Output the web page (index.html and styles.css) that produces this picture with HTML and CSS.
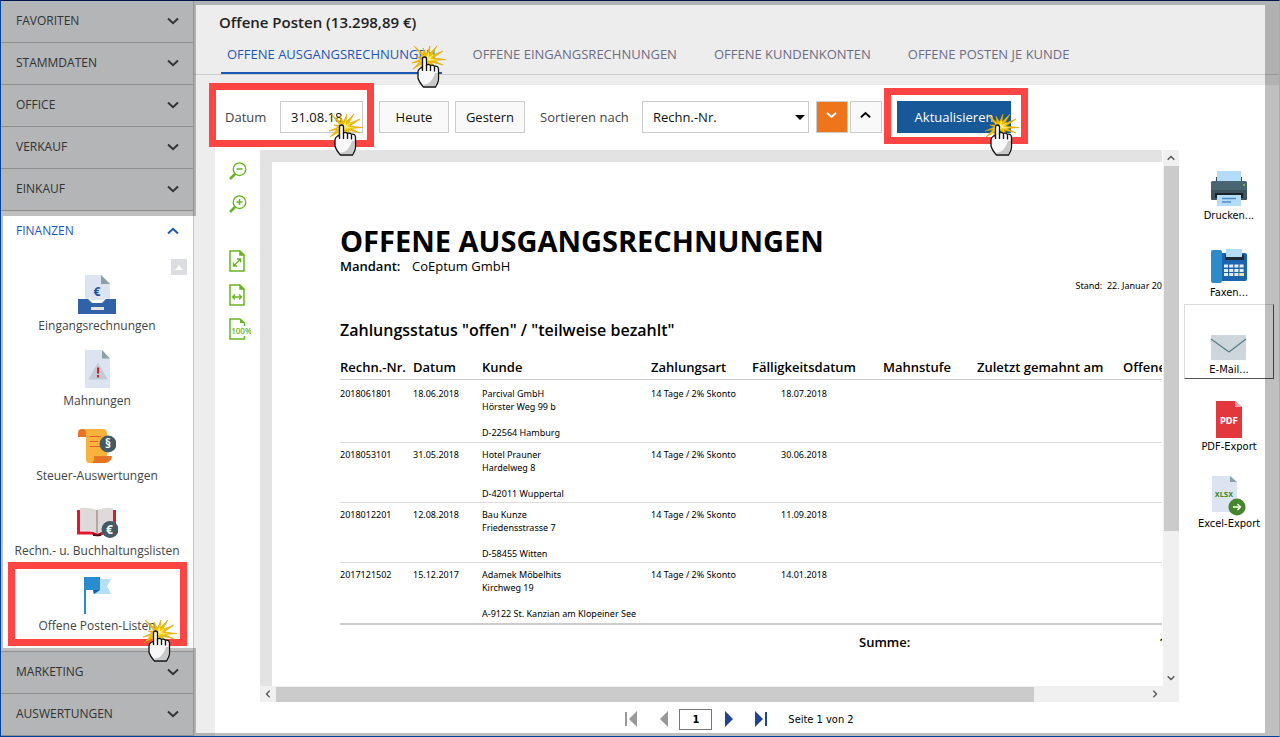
FILE: index.html
```html
<!DOCTYPE html>
<html lang="de">
<head>
  <meta charset="UTF-8">
  <meta name="viewport" content="width=device-width, initial-scale=1.0">
  <title>Offene Posten</title>
  <link rel="stylesheet" href="styles.css">
</head>
<body>
  <svg class="sprite" aria-hidden="true">
    <symbol id="chevron" viewBox="0 0 12 8">
      <path d="M1 1.5 6 6.200 11 1.500" fill="none" stroke="currentColor" stroke-width="2"/>
    </symbol>
    <symbol id="hand" viewBox="0 0 35 43">
      <path d="M2 1 12 9.500 11 3 14.500 9 18 1 17 9 25 1 19.500 10.500 31 6 21 13 34 14.500 22 15.500 31 20 19 17 23 23 15 17.500 6 27 10.500 18.500 1 24 8 16.500 0 18 9.500 14 5 12 11 12Z" fill="#f2c000" stroke="#dda200" stroke-width=".6"/>
      <path d="M11 10.500 14 12.500 17 7 17 12 22 9 18.500 13.500 26 15 17 15.500 11 19 13 15 8 15.500 12.500 13.500Z" fill="#ffec6e"/>
      <path d="M10.500 26V14q0-2 2-2t2 2v6q1.500-1.500 4 .5 2-1 4 .8 3.500-.8 4 2.700v10q0 3-3 8H11.500Q7 37 6 33v-6q0-3 4.500-5z" fill="#f8f8f8" stroke="#111" stroke-width="1.300"/>
      <path d="M14.500 20v6M18.500 21v5M22.500 22v4.500" stroke="#111" stroke-width="1.300" fill="none"/>
      <path d="M23 28h2.800v7l-2.800 6H12.500l-1-1.500q8 0 11.500-11.500z" fill="#aaa" opacity=".6"/>
    </symbol>
    <symbol id="sheet" viewBox="0 0 16 22">
      <path d="M11 1H1v20h14V5zM11 1v4h4z" fill="none" stroke="currentColor" stroke-width="1.500"/>
      <path d="M11 1v4h4z" fill="currentColor"/>
    </symbol>
  </svg>

  <div class="window">
    <nav class="sidebar">
      <button class="group">FAVORITEN<svg><use href="#chevron"/></svg></button>
      <button class="group">STAMMDATEN<svg><use href="#chevron"/></svg></button>
      <button class="group">OFFICE<svg><use href="#chevron"/></svg></button>
      <button class="group">VERKAUF<svg><use href="#chevron"/></svg></button>
      <button class="group">EINKAUF<svg><use href="#chevron"/></svg></button>
      <div class="open-group">
        <button class="group active">FINANZEN<svg><use href="#chevron"/></svg></button>
        <button class="scroll-up" aria-label="Nach oben"></button>
        <a class="module" href="#">
          <svg width="38" height="40" viewBox="0 0 38 40">
            <path d="M7 0h16l9 9v16H7z" fill="#dbe4f0"/><path d="M23 0v9h9z" fill="#8aa0a8"/>
            <path d="M0 24h10l4 4h10l4-4h10v15H0z" fill="#2f62a8"/><path d="M11 23l4 4h9l4-4" fill="none" stroke="#fff" stroke-width="1"/>
            <rect x="13" y="32" width="13" height="3" fill="#e6e4e2"/>
            <text x="19" y="20.500" class="ic-text" font-size="12" fill="#1d4f9e">€</text>
          </svg>
          Eingangsrechnungen
        </a>
        <a class="module" href="#">
          <svg width="38" height="40" viewBox="0 0 38 40">
            <path d="M7 0h17l8 9v29H7z" fill="#dbe4f0"/><path d="M24 0v8.500h8z" fill="#8aa0a8"/>
            <path d="M20 13.500 29 29H11z" fill="#c2ccd4" stroke="#c2ccd4" stroke-linejoin="round"/>
            <path d="M20 17.500v6M20 25v2.500" stroke="#e0172d" stroke-width="2"/>
          </svg>
          Mahnungen
        </a>
        <a class="module" href="#">
          <svg width="38" height="40" viewBox="0 0 38 40">
            <path d="M5 4h20q4 0 4 5v22h-4q0 7-5 7H11q-3 0-3-4V12z" fill="#f9b23c"/>
            <path d="M0 12V8q0-4 4-4t4 4v4z" fill="#e87428"/>
            <path d="M16 31h18q-1 7-7 7H13q4-1 3-7z" fill="#e87428"/>
            <path d="M12 11.500h11M12 16.500h8M12 21.500h10" stroke="#e05f28" stroke-width="1.200"/>
            <circle cx="30" cy="19" r="8.500" fill="#435a64"/>
            <text x="30" y="23" class="ic-text" font-size="12" fill="#fff">§</text>
          </svg>
          Steuer-Auswertungen
        </a>
        <a class="module" href="#">
          <svg width="42" height="40" viewBox="0 0 42 40">
            <path d="M2.500 10v23h14q5 4 10 0h12V10" fill="none" stroke="#e3162f" stroke-width="3"/>
            <path d="M4 8q8-1 17 2 9-3 16-2v23q-8-1-16 2-9-3-17-2z" fill="#dfdada"/>
            <path d="M21 10v23" stroke="#b9a4a4" stroke-width="2"/>
            <path d="M17 33q4 3 8 0v3h-8z" fill="#45151b"/>
            <circle cx="34" cy="29.500" r="8.500" fill="#435a64"/>
            <text x="33.500" y="34" class="ic-text" font-size="12" fill="#fff">€</text>
          </svg>
          Rechn.- u. Buchhaltungslisten
        </a>
        <a class="module marked" href="#">
          <svg width="38" height="40" viewBox="0 0 38 40">
            <path d="M15 4h18l-4 7 4 8H15z" fill="#b5def7"/>
            <path d="M6 2h16v13H8v24H6z" fill="#288cce"/><path d="M15 15h7l-6 4z" fill="#0d5da8"/>
          </svg>
          Offene Posten-Listen
          <svg class="pointer"><use href="#hand"/></svg>
        </a>
      </div>
      <button class="group">MARKETING<svg><use href="#chevron"/></svg></button>
      <button class="group">AUSWERTUNGEN<svg><use href="#chevron"/></svg></button>
    </nav>

    <main>
      <header>
        <h1>Offene Posten (13.298,89 €)</h1>
        <nav class="tabs">
          <a class="current" href="#">OFFENE AUSGANGSRECHNUNGEN<svg class="pointer"><use href="#hand"/></svg></a>
          <a href="#">OFFENE EINGANGSRECHNUNGEN</a>
          <a href="#">OFFENE KUNDENKONTEN</a>
          <a href="#">OFFENE POSTEN JE KUNDE</a>
        </nav>
      </header>

      <div class="content">
        <form class="toolbar">
          <div class="date-field marked">
            <label for="date">Datum</label>
            <input id="date" type="text" value="31.08.18">
            <svg class="pointer"><use href="#hand"/></svg>
          </div>
          <button type="button" class="btn">Heute</button>
          <button type="button" class="btn">Gestern</button>
          <label class="sort-label" for="sort">Sortieren nach</label>
          <div class="select">
            <select id="sort"><option>Rechn.-Nr.</option></select>
          </div>
          <button type="button" class="order desc" aria-label="Absteigend"><svg><use href="#chevron"/></svg></button>
          <button type="button" class="order asc" aria-label="Aufsteigend"><svg><use href="#chevron"/></svg></button>
          <div class="refresh marked">
            <button type="button">Aktualisieren</button>
            <svg class="pointer"><use href="#hand"/></svg>
          </div>
        </form>

        <div class="workspace">
          <div class="zoom-tools">
            <button aria-label="Verkleinern">
              <svg width="18" height="18" viewBox="0 0 18 18" fill="none" stroke="currentColor"><circle cx="10.500" cy="7.200" r="6.300" stroke-width="1.300"/><path d="M1 17l5.500-5.500" stroke-width="2.500"/><path d="M7.500 7h6" stroke-width="1.500"/></svg>
            </button>
            <button aria-label="Vergrößern">
              <svg width="18" height="18" viewBox="0 0 18 18" fill="none" stroke="currentColor"><circle cx="10.500" cy="7.200" r="6.300" stroke-width="1.300"/><path d="M1 17l5.500-5.500" stroke-width="2.500"/><path d="M7.500 7h6M10.500 4v6" stroke-width="1.500"/></svg>
            </button>
            <button class="fit" aria-label="Ganze Seite">
              <svg width="16" height="22" viewBox="0 0 16 22"><use href="#sheet"/><path d="M5 15.500 11 9.500M8 9h3.500v3.500M4.500 12.500V16H8" fill="none" stroke="currentColor" stroke-width="1.300"/></svg>
            </button>
            <button class="fit" aria-label="Seitenbreite">
              <svg width="16" height="22" viewBox="0 0 16 22"><use href="#sheet"/><path d="M3.500 13h9M6 10.500 3.500 13 6 15.500M10 10.500l2.500 2.500-2.500 2.500" fill="none" stroke="currentColor" stroke-width="1.300"/></svg>
            </button>
            <button class="fit" aria-label="Originalgröße">
              <svg width="22" height="22" viewBox="0 0 22 22"><path d="M15.500 8V5L11 1H1v20h14.500v-3" fill="none" stroke="currentColor" stroke-width="1.500"/><path d="M11 1v4h4.500z" fill="currentColor"/><text x="12.500" y="16" class="ic-text zoom-text" font-size="8" fill="currentColor">100%</text></svg>
            </button>
          </div>

          <div class="viewer">
            <div class="frame">
              <article class="page">
                <h2>OFFENE AUSGANGSRECHNUNGEN</h2>
                <p class="client"><b>Mandant:</b>CoEptum GmbH</p>
                <p class="as-of">Stand:&nbsp; 22. Januar 20</p>
                <h3>Zahlungsstatus "offen" / "teilweise bezahlt"</h3>
                <table>
                  <colgroup>
                    <col class="c-no"><col class="c-date"><col class="c-customer"><col class="c-terms">
                    <col class="c-due"><col class="c-level"><col class="c-last"><col>
                  </colgroup>
                  <thead>
                    <tr><th>Rechn.-Nr.</th><th>Datum</th><th>Kunde</th><th>Zahlungsart</th><th>Fälligkeitsdatum</th><th>Mahnstufe</th><th>Zuletzt gemahnt am</th><th>Offene</th></tr>
                  </thead>
                  <tbody>
                    <tr><td>2018061801</td><td>18.06.2018</td><td>Parcival GmbH<br>Hörster Weg 99 b<br><br>D-22564 Hamburg</td><td>14 Tage / 2% Skonto</td><td class="due">18.07.2018</td><td></td><td></td><td></td></tr>
                    <tr><td>2018053101</td><td>31.05.2018</td><td>Hotel Prauner<br>Hardelweg 8<br><br>D-42011 Wuppertal</td><td>14 Tage / 2% Skonto</td><td class="due">30.06.2018</td><td></td><td></td><td></td></tr>
                    <tr><td>2018012201</td><td>12.08.2018</td><td>Bau Kunze<br>Friedensstrasse 7<br><br>D-58455 Witten</td><td>14 Tage / 2% Skonto</td><td class="due">11.09.2018</td><td></td><td></td><td></td></tr>
                    <tr><td>2017121502</td><td>15.12.2017</td><td>Adamek Möbelhits<br>Kirchweg 19<br><br>A-9122 St. Kanzian am Klopeiner See</td><td>14 Tage / 2% Skonto</td><td class="due">14.01.2018</td><td></td><td></td><td></td></tr>
                  </tbody>
                  <tfoot>
                    <tr><th colspan="5">Summe:</th><td colspan="3">1</td></tr>
                  </tfoot>
                </table>
              </article>
            </div>
            <div class="scrollbar vertical">
              <svg class="up"><use href="#chevron"/></svg>
              <div class="track"><div class="thumb"></div></div>
              <svg><use href="#chevron"/></svg>
            </div>
            <div class="scrollbar horizontal">
              <svg class="left"><use href="#chevron"/></svg>
              <div class="track"><div class="thumb"></div></div>
              <svg class="right"><use href="#chevron"/></svg>
            </div>
            <div class="corner"></div>
          </div>

          <div class="actions">
            <button>
              <svg width="38" height="40" viewBox="0 0 38 40">
                <path d="M6 13V9h26v4" fill="#37474f"/><path d="M7 3h24v10H7z" fill="#b3dcf7"/>
                <rect x="1" y="13" width="36" height="19" rx="1.500" fill="#4a6572"/><path d="M1 22h36v8.500q0 1.500-1.500 1.500h-33Q1 32 1 30.500z" fill="#3e5560"/>
                <path d="M6 30v-4h26v4" fill="none" stroke="#18242a" stroke-width="2"/>
                <path d="M7 27h24v11H7z" fill="#b3dcf7"/><path d="M12 30.500h14M12 34h9" stroke="#5189c7" stroke-width="1.500"/><circle cx="34" cy="17" r="1" fill="#8bd42c"/>
              </svg>
              Drucken...
            </button>
            <button>
              <svg width="38" height="40" viewBox="0 0 38 40">
                <rect x="9" y="8" width="28" height="28" rx="2" fill="#1c64ae"/><rect x="1" y="5" width="11" height="33" rx="2" fill="#2c8ccb"/>
                <rect x="15" y="10" width="19" height="5" fill="#1d2935"/><path d="M16 4h16v8H16z" fill="#b3dcf7"/>
                <path d="M14 21h20M14 25.500h20M14 29.500h20" stroke="#e4edf4" stroke-width="3" stroke-dasharray="4 1.200"/><path d="M29.500 29.500h4.500" stroke="#f2e488" stroke-width="3"/>
              </svg>
              Faxen...
            </button>
            <button class="focused">
              <svg width="38" height="40" viewBox="0 0 38 40">
                <rect x="1" y="13" width="35" height="25" rx="1" fill="#ccd6db"/><path d="M1 17l18 13 17-13" fill="none" stroke="#5b7d8b" stroke-width="1.300"/>
              </svg>
              E-Mail...
            </button>
            <button>
              <svg width="38" height="40" viewBox="0 0 38 40">
                <path d="M6 2h19l7 6v31H6z" fill="#e2373d"/><path d="M25 2v6h7z" fill="#f5a3a3"/>
                <text x="19" y="25" class="ic-text" font-size="9" fill="#fff">PDF</text>
              </svg>
              PDF-Export
            </button>
            <button>
              <svg width="38" height="40" viewBox="0 0 38 40">
                <path d="M2 0h18l7 6v30H2z" fill="#dbe4f0"/><path d="M20 0v6h7z" fill="#8aa0a8"/>
                <text x="14" y="21" class="ic-text" font-size="7" fill="#3d8b2c">XLSX</text>
                <circle cx="27" cy="31" r="8.500" fill="#45862f"/><path d="M23 31h7.500M27.500 28l3 3-3 3" fill="none" stroke="#fff" stroke-width="1.300"/>
              </svg>
              Excel-Export
            </button>
          </div>
        </div>

        <div class="pager">
          <button disabled aria-label="Erste Seite"><svg width="14" height="16"><path d="M1 1v14" stroke="currentColor" stroke-width="2"/><path d="M12 0v16L4 8z" fill="currentColor"/></svg></button>
          <button disabled aria-label="Vorherige Seite"><svg width="10" height="16"><path d="M9 0v16L1 8z" fill="currentColor"/></svg></button>
          <input type="text" value="1" aria-label="Seite">
          <button aria-label="Nächste Seite"><svg width="10" height="16"><path d="M1 0v16l8-8z" fill="currentColor"/></svg></button>
          <button aria-label="Letzte Seite"><svg width="14" height="16"><path d="M12 1v14" stroke="currentColor" stroke-width="2"/><path d="M1 0v16l8-8z" fill="currentColor"/></svg></button>
          <span>Seite 1 von 2</span>
        </div>
      </div>
    </main>

    <div class="dim dim-top"></div>
    <div class="dim dim-right"></div>
    <div class="dim dim-bottom"></div>
    <div class="dim dim-menu-top"></div>
    <div class="dim dim-menu-edge"></div>
    <div class="dim dim-menu-bottom"></div>
  </div>
</body>
</html>
```
FILE: styles.css
```css
* {
  box-sizing: border-box;
}

body {
  margin: 0;
  font-family: "Open Sans", "Noto Sans", sans-serif;
  font-size: 13px;
  color: #444;
}

button,
input,
select {
  font: inherit;
  border-radius: 0;
}

button {
  padding: 0;
  border: none;
  background: none;
  color: inherit;
}

a {
  color: inherit;
  text-decoration: none;
}

.sprite {
  display: none;
}

.ic-text {
  font-weight: 700;
  text-anchor: middle;
}

.zoom-text {
  font-weight: 600;
}

.window {
  position: relative;
  display: flex;
  min-height: 100vh;
  border: 1px solid #00429a;
  border-top-color: #001450;
  border-right-color: #aaa;
}

/* Seitenmenü */
.sidebar {
  flex: 0 0 193px;
  border-right: 1px solid #c4c4c4;
  background: #fff;
}

.group {
  display: flex;
  align-items: center;
  justify-content: space-between;
  width: 100%;
  height: 42px;
  padding: 0 14px 2px 15px;
  border-bottom: 1px solid #bfbfbf;
  background: #eff2f4;
  font-size: 12px;
}

.group svg {
  width: 12px;
  height: 8px;
}

.group.active {
  border-color: #fff;
  background: #fff;
  color: #1d58b7;
}

.group.active svg {
  transform: rotate(180deg);
}

.open-group {
  position: relative;
  display: flex;
  flex-direction: column;
  border-bottom: 1px solid #bfbfbf;
  padding-bottom: 1px;
}

.scroll-up {
  align-self: flex-end;
  width: 16px;
  height: 16px;
  margin: 6px 6px 0 0;
  background: #dcdde0;
}

.scroll-up::before {
  content: "";
  display: block;
  width: 0;
  margin: 0 auto;
  border: 4px solid transparent;
  border-top: none;
  border-bottom: 5px solid #fff;
}

.module {
  display: flex;
  flex-direction: column;
  align-items: center;
  gap: 2px;
  height: 75px;
  font-size: 12px;
  line-height: 18px;
}

/* rote Markierung */
.marked {
  position: relative;
}

.marked::after {
  content: "";
  position: absolute;
  border: 7px solid #ff4444;
  pointer-events: none;
}

.module.marked {
  z-index: 2;
}

.module.marked::after {
  inset: -13px 6px 4px 7px;
}

.pointer {
  position: absolute;
  z-index: 5;
  width: 35px;
  height: 43px;
}

.module .pointer {
  left: 142px;
  top: 44px;
}

/* Kopfbereich */
main {
  flex: 1;
  min-width: 0;
  display: flex;
  flex-direction: column;
  background: #ededed;
}

header {
  padding: 10px 0 0 25px;
  border-bottom: 1px solid #ccc;
}

h1 {
  margin: 0;
  font-size: 15px;
  font-weight: 600;
  line-height: 22px;
  color: #222;
}

.tabs {
  display: flex;
  gap: 25px;
  padding-left: 2px;
}

.tabs a {
  position: relative;
  padding: 12px 6px 9px;
  border-bottom: 2px solid transparent;
  line-height: 18px;
  color: #6c6c84;
}

.tabs .current {
  color: #1d58b7;
  border-color: #1d58b7;
}

.tabs .pointer {
  right: -5px;
  top: 12px;
}

.content {
  flex: 1;
  display: flex;
  flex-direction: column;
  margin: 10px 0 0 21px;
  background: #fff;
}

.toolbar {
  display: flex;
  align-items: center;
  height: 65px;
  padding: 0 0 2px 10px;
}

.date-field {
  display: flex;
  align-items: center;
  justify-content: space-between;
  width: 138px;
  margin-right: 16px;
}

.date-field.marked::after {
  inset: -18px -11px -14px -16px;
}

.date-field input {
  width: 83px;
  height: 32px;
  padding: 0 10px;
  border: 1px solid #ccc;
  color: #111;
}

.date-field .pointer {
  right: -1px;
  top: 12px;
}

.btn {
  width: 70px;
  height: 32px;
  margin-right: 6px;
  border: 1px solid #ccc;
  background: #f9f9f9;
  color: #111;
}

.sort-label {
  width: 102px;
  margin-left: 9px;
}

.select {
  position: relative;
  width: 167px;
  margin-right: 7px;
}

.select::after {
  content: "";
  position: absolute;
  right: 4px;
  top: 14px;
  border: 5px solid transparent;
  border-top-color: #000;
  border-bottom: none;
}

.select select {
  appearance: none;
  display: block;
  width: 100%;
  height: 32px;
  padding: 0 10px;
  border: 1px solid #ccc;
  background: #fff;
  color: #111;
}

.order {
  display: flex;
  align-items: center;
  justify-content: center;
  width: 32px;
  height: 32px;
  margin-right: 2px;
  padding: 0 2px 3px 0;
  border: 1px solid #ccc;
}

.order svg {
  width: 11px;
  height: 8px;
}

.desc {
  background: #ee751b;
  color: #fff;
}

.asc {
  background: #f9f9f9;
  color: #000;
}

.asc svg {
  transform: rotate(180deg);
}

.refresh {
  margin-left: 13px;
}

.refresh button {
  display: block;
  width: 114px;
  height: 32px;
  background: #165898;
  color: #fff;
}

.refresh.marked::after {
  inset: -13px -17px -11px -13px;
}

.refresh .pointer {
  right: -9px;
  top: 12px;
}

/* Druckvorschau */
.workspace {
  flex: 1;
  display: flex;
}

.zoom-tools {
  display: flex;
  flex-direction: column;
  width: 45px;
  padding: 12px 0 0 14px;
  color: #68b521;
}

.zoom-tools button {
  display: flex;
  height: 18px;
  margin-bottom: 15px;
}

.zoom-tools .fit {
  height: 22px;
  margin-bottom: 12px;
}

.zoom-tools button:nth-child(3) {
  margin-top: 22px;
}

.viewer {
  flex: 1;
  min-width: 0;
  display: grid;
  grid-template-columns: minmax(0, 1fr) 16px;
  grid-template-rows: 1fr 16px;
  background: #f0f0f0;
}

.frame {
  display: flex;
  padding: 12px 0 0 12px;
  border-right: 1px solid #fff;
  background: #e3e3e3;
}

.page {
  flex: 1;
  min-width: 0;
  overflow: hidden;
  padding: 62px 0 0 68px;
  background: #fff;
  color: #000;
}

.page h2 {
  margin: 0;
  font-size: 29px;
  font-weight: 700;
  line-height: 34px;
  white-space: nowrap;
}

.page p {
  margin: 0;
}

.client {
  line-height: 16px;
}

.client b {
  display: inline-block;
  width: 72px;
  font-weight: 600;
}

.as-of {
  padding-top: 4px;
  font-family: "Noto Sans", sans-serif;
  font-size: 9px;
  line-height: 16px;
  text-align: right;
}

.page h3 {
  margin: 24px 0 14px;
  font-size: 16px;
  font-weight: 600;
  line-height: 24px;
}

table {
  width: 100%;
  table-layout: fixed;
  border-collapse: separate;
  border-spacing: 0;
}

.c-no { width: 73px; }
.c-date { width: 69px; }
.c-customer { width: 169px; }
.c-terms { width: 101px; }
.c-due { width: 131px; }
.c-level { width: 94px; }
.c-last { width: 146px; }

th,
td {
  padding: 0;
  text-align: left;
  vertical-align: top;
  white-space: nowrap;
}

thead th {
  height: 24px;
  border-bottom: 1px solid #ccc;
  font-size: 13px;
  font-weight: 600;
  line-height: 22px;
}

tbody td {
  padding: 5px 0 2px;
  border-bottom: 1px solid #ddd;
  font-family: "Noto Sans", sans-serif;
  font-size: 9px;
  line-height: 13px;
}

tbody tr:first-child td {
  padding: 7px 0 3px;
}

tbody tr:last-child td {
  padding-bottom: 3px;
  border-bottom: 2px solid #ccc;
}

tbody .due,
tbody tr:first-child .due {
  padding-right: 27px;
  text-align: center;
}

tfoot th,
tfoot td {
  padding-top: 8px;
  font-weight: 600;
  line-height: 18px;
}

tfoot th {
  padding-left: 519px;
}

tfoot td {
  padding-left: 276px;
}

.scrollbar {
  display: flex;
  align-items: center;
  color: #505050;
}

.scrollbar svg {
  flex: none;
  width: 8px;
  height: 6px;
  margin: 5px 4px;
}

.scrollbar .up {
  transform: rotate(180deg);
}

.scrollbar .left {
  transform: rotate(90deg);
}

.scrollbar .right {
  transform: rotate(-90deg);
}

.track {
  flex: 1;
}

.thumb {
  background: #cbcbcb;
}

.vertical {
  flex-direction: column;
}

.vertical .thumb {
  width: 15px;
  height: 100%;
}

.vertical .track {
  display: flex;
  padding-bottom: 139px;
}

.horizontal .thumb {
  width: 87%;
  height: 15px;
}

.actions {
  display: flex;
  flex-direction: column;
  gap: 2px;
  width: 100px;
  padding-left: 5px;
}

.actions button {
  display: flex;
  flex-direction: column;
  align-items: center;
  width: 90px;
  height: 75px;
  padding-top: 17px;
  border: 1px solid transparent;
  font-family: "DejaVu Sans Condensed", "DejaVu Sans", sans-serif;
  font-size: 11px;
  line-height: 16px;
  color: #000;
}

.actions .focused {
  border-color: #ddd #555 #555 #ddd;
}

.pager {
  display: flex;
  align-items: center;
  justify-content: center;
  height: 34px;
  padding-right: 15px;
  font-family: "DejaVu Sans Condensed", "DejaVu Sans", sans-serif;
  font-size: 11px;
  color: #000;
}

.pager button {
  display: flex;
  margin-right: 20px;
  color: #234391;
}

.pager button:disabled {
  color: #999;
}

.pager button:nth-child(2) {
  margin-right: 10px;
}

.pager input {
  width: 33px;
  height: 21px;
  margin-right: 12px;
  padding: 0;
  border: 1px solid #767676;
  text-align: center;
  font-weight: 700;
}

/* abgedunkelte Bereiche */
.dim {
  position: absolute;
  background: rgba(0, 0, 0, 0.25);
  pointer-events: none;
}

.dim-top {
  top: 0;
  left: 195px;
  right: 0;
  height: 4px;
}

.dim-right {
  top: 4px;
  right: 0;
  bottom: 0;
  width: 14px;
}

.dim-bottom {
  left: 195px;
  right: 14px;
  bottom: 0;
  height: 3px;
}

.dim-menu-top {
  top: 0;
  left: 0;
  width: 195px;
  height: 215px;
}

.dim-menu-edge {
  top: 215px;
  left: 0;
  width: 2px;
  height: 432px;
}

.dim-menu-bottom {
  top: 647px;
  bottom: 0;
  left: 0;
  width: 195px;
}
```
